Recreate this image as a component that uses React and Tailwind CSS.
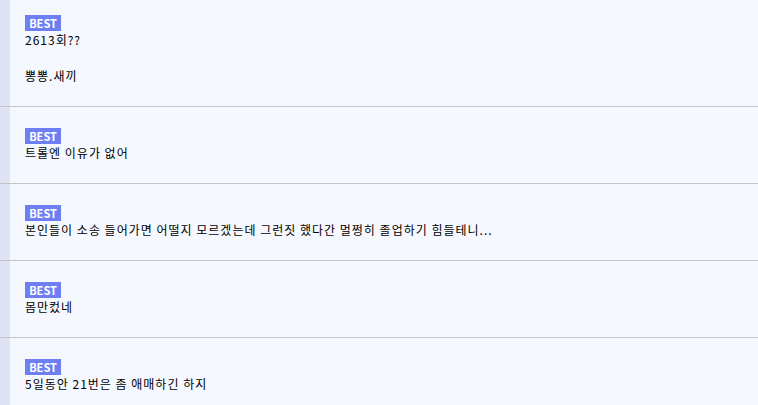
import React from "react";

const comments = [
  { id: 1, lines: ["2613회??", "", "뽕뽕.새끼"] },
  { id: 2, lines: ["트롤엔 이유가 없어"] },
  { id: 3, lines: ["본인들이 소송 들어가면 어떨지 모르겠는데 그런짓 했다간 멀쩡히 졸업하기 힘들테니..."] },
  { id: 4, lines: ["몸만컸네"] },
  { id: 5, lines: ["5일동안 21번은 좀 애매하긴 하지"] },
];

export default function App() {
  return (
    <div
      className="w-[758px] h-[405px] overflow-hidden bg-[#f5f8fe] text-[12px] text-black"
      style={{ fontFamily: '"Noto Sans CJK KR", "Noto Sans", sans-serif' }}
    >
      {comments.map((c, i) => (
        <div
          key={c.id}
          className={`flex ${i > 0 ? "border-t border-[#c6c6c6]" : ""}`}
        >
          <div className="w-[10px] shrink-0 bg-[#dfe4f4]" />
          <div className={`pl-[15px] pb-[21px] ${i === 0 ? "pt-[15px]" : "pt-[21px]"}`}>
            <span className="flex items-center justify-center w-[36px] h-[16px] bg-[#6e7ff4] text-white text-[11px] font-bold leading-none">
              BEST
            </span>
            {c.lines.map((l, j) => (
              <p key={j} className="h-[18px] leading-[18px] whitespace-nowrap tracking-[1px]">
                {l}
              </p>
            ))}
          </div>
        </div>
      ))}
    </div>
  );
}
